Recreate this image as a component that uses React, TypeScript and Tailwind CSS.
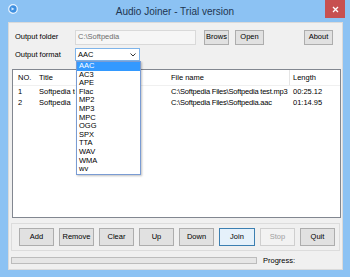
import React from "react";

const font = { fontFamily: '"Liberation Sans", Arial, sans-serif' };

function Btn({ label, w, variant }: { label: string; w: string; variant?: "focus" | "disabled" }) {
  const base = "flex items-center justify-center h-[18px] text-[7.5px] border";
  let cls = "bg-[#e1e1e1] border-[#adadad] text-[#000]";
  if (variant === "focus") cls = "bg-[#e5f1fb] border-[#3c7fb1] text-[#000]";
  if (variant === "disabled") cls = "bg-[#f2f2f2] border-[#cfcfcf] text-[#a0a0a0]";
  return <div className={`${base} ${cls} ${w}`}>{label}</div>;
}

export default function App() {
  const formats = ["AAC", "AC3", "APE", "Flac", "MP2", "MP3", "MPC", "OGG", "SPX", "TTA", "WAV", "WMA", "wv"];
  return (
    <div className="w-[350px] h-[277px] bg-[#8cc2f3] flex flex-col relative overflow-hidden" style={font}>
      {/* title bar */}
      <div className="h-[22px] flex items-center relative shrink-0">
        <svg className="absolute left-[8px] top-[4px]" width="10" height="10" viewBox="0 0 10 10">
          <circle cx="5" cy="5" r="4.3" fill="#3d8fe0" stroke="#e8f3ff" strokeWidth="1.2" />
          <path d="M3.5 3.2 L3.5 6.5 L6.5 5 Z" fill="#cfe6ff" />
        </svg>
        <div className="w-full text-center text-[10px] text-[#1e3550] pt-[1px]">Audio Joiner - Trial version</div>
        <div className="absolute right-[5px] top-0 w-[20px] h-[18px] bg-[#c75050] flex items-center justify-center">
          <svg width="7" height="7" viewBox="0 0 7 7">
            <path d="M1 1 L6 6 M6 1 L1 6" stroke="#ffffff" strokeWidth="1.3" />
          </svg>
        </div>
      </div>
      {/* client */}
      <div className="ml-[8px] mr-[7px] h-[248px] bg-[#f0f0f0] border border-[#dadada] flex flex-col text-[7.5px] text-black relative">
        {/* output folder row */}
        <div className="flex items-center mt-[6px] h-[16px]">
          <div className="w-[66px] pl-[6px]">Output folder</div>
          <div className="w-[121px] h-[15px] border border-[#d9d9d9] bg-[#f6f6f6] text-[#6d6d6d] flex items-center pl-[2px]">C:\Softpedia</div>
          <div className="ml-[8px] w-[25px] h-[15px] border border-[#adadad] bg-[#e1e1e1] flex items-center justify-center">Brows</div>
          <div className="ml-[6px] w-[29px] h-[15px] border border-[#adadad] bg-[#e1e1e1] flex items-center justify-center">Open</div>
          <div className="ml-[40px] w-[29px] h-[15px] border border-[#adadad] bg-[#e1e1e1] flex items-center justify-center">About</div>
        </div>
        {/* output format row */}
        <div className="flex items-center mt-[3px] h-[13px]">
          <div className="w-[66px] pl-[6px]">Output format</div>
          <div className="w-[65px] h-[13px] border border-[#7eb4ea] bg-white flex items-center justify-between pl-[2px] pr-[3px]">
            <span>AAC</span>
            <svg width="6" height="4" viewBox="0 0 6 4">
              <path d="M0.5 0.5 L3 3 L5.5 0.5" stroke="#333" strokeWidth="1" fill="none" />
            </svg>
          </div>
        </div>
        {/* list view */}
        <div className="mt-[8px] ml-[3px] mr-[1px] h-[149px] bg-white border border-[#828790] flex flex-col">
          <div className="flex h-[16px] items-center border-b border-[#f0f0f0]">
            <div className="w-[26px] pl-[5px]">NO.</div>
            <div className="w-[132px]">Title</div>
            <div className="w-[118px]">File name</div>
            <div className="flex-1 h-full flex items-center border-l border-[#e5e5e5] pl-[3px]">Length</div>
          </div>
          {[
            ["1", "Softpedia test", "C:\\Softpedia Files\\Softpedia test.mp3", "00:25.12"],
            ["2", "Softpedia", "C:\\Softpedia Files\\Softpedia.aac", "01:14.95"],
          ].map((r) => (
            <div key={r[0]} className="flex h-[11px] items-center">
              <div className="w-[26px] pl-[5px]">{r[0]}</div>
              <div className="w-[132px]">
                <div className="w-[36px] overflow-hidden whitespace-nowrap">{r[1]}</div>
              </div>
              <div className="w-[118px] whitespace-nowrap tracking-[-0.2px]">{r[2]}</div>
              <div className="flex-1 pl-[4px]">{r[3]}</div>
            </div>
          ))}
        </div>
        {/* buttons panel */}
        <div className="mt-[5px] ml-[2px] mr-[2px] h-[28px] border border-[#dcdcdc] flex items-center gap-[5px] pl-[7px]">
          <Btn label="Add" w="w-[35px]" />
          <Btn label="Remove" w="w-[35px]" />
          <Btn label="Clear" w="w-[35px]" />
          <Btn label="Up" w="w-[35px]" />
          <Btn label="Down" w="w-[35px]" />
          <Btn label="Join" w="w-[36px]" variant="focus" />
          <Btn label="Stop" w="w-[35px]" variant="disabled" />
          <Btn label="Quit" w="w-[35px]" />
        </div>
        {/* progress */}
        <div className="flex items-center mt-[4px] ml-[2px]">
          <div className="w-[246px] h-[7px] bg-[#e6e6e6] border border-[#bcbcbc]" />
          <div className="ml-[6px]">Progress:</div>
        </div>
        {/* dropdown */}
        <div className="absolute left-[67px] top-[38px] w-[65px] bg-white border border-[#7a9cd3] shadow-[1px_1px_2px_rgba(0,0,0,0.25)] flex flex-col">
          {formats.map((f, i) => (
            <div key={f} className={`h-[8.6px] leading-[8.6px] pl-[2px] ${i === 0 ? "bg-[#3399ff] text-white" : ""}`}>{f}</div>
          ))}
        </div>
      </div>
    </div>
  );
}
